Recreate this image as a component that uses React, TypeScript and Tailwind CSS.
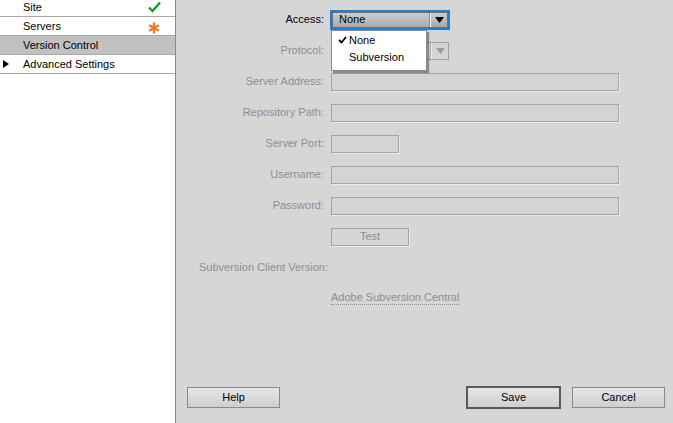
import React from 'react';

const font = { fontFamily: '"Liberation Sans", Arial, sans-serif' };

function Field({ label, children }: { label: string; children?: React.ReactNode }) {
  return (
    <div className="flex h-[31px] items-center">
      <div className="w-[148px] shrink-0 text-right text-[#8e8e8e]">{label}</div>
      <div className="ml-[7px] flex items-center">{children}</div>
    </div>
  );
}

function TextBox({ w = 'w-[288px]' }: { w?: string }) {
  return (
    <div className={`${w} h-[18px] border border-[#a3a3a3] bg-[#d4d4d4] shadow-[1px_1px_0_#ececec]`} />
  );
}

function Arrow({ color }: { color: string }) {
  return (
    <svg width="9" height="6" viewBox="0 0 9 6">
      <path d="M0 0h9L4.5 6z" fill={color} />
    </svg>
  );
}

export default function App() {
  return (
    <div style={font} className="flex h-[423px] w-[673px] overflow-hidden text-[11px] leading-none text-black">
      {/* Sidebar */}
      <div className="w-[176px] shrink-0 border-r border-[#8a8a8a] bg-white">
        <div className="-mt-[2px]">
          <div className="flex h-[19px] items-center justify-between border-b border-[#a9a9a9] pl-[23px] pr-[14px]">
            <span>Site</span>
            <svg width="13" height="12" viewBox="0 0 13 12">
              <path d="M1 6.5l3.5 3.5L12 1.5" stroke="#1c9a1c" strokeWidth="2.4" fill="none" />
            </svg>
          </div>
          <div className="flex h-[19px] items-center justify-between border-b border-[#a9a9a9] pl-[23px] pr-[15px]">
            <span>Servers</span>
            <svg width="12" height="12" viewBox="0 0 12 12" className="relative top-[2px]">
              <g stroke="#ea7a2a" strokeWidth="2.4" strokeLinecap="butt">
                <path d="M6 0.5v11" />
                <path d="M1.2 3.2l9.6 5.6" />
                <path d="M1.2 8.8l9.6-5.6" />
              </g>
            </svg>
          </div>
          <div className="flex h-[19px] items-center border-b border-[#a9a9a9] bg-[#c1c1c1] pl-[23px]">
            <span>Version Control</span>
          </div>
          <div className="flex h-[19px] items-center border-b border-[#a9a9a9] pl-[3px]">
            <svg width="6" height="8" viewBox="0 0 6 8" className="mr-[14px]">
              <path d="M0 0l6 4-6 4z" fill="#000" />
            </svg>
            <span>Advanced Settings</span>
          </div>
        </div>
      </div>

      {/* Main */}
      <div className="flex flex-1 flex-col bg-[#d6d6d6]">
        <div className="pt-[4px]">
          <div className="flex h-[31px] items-center">
            <div className="w-[148px] shrink-0 text-right">Access:</div>
            <div className="relative ml-[6px]">
              <div className="flex h-[20px] w-[120px] items-center border-2 border-[#1c7fd8]">
                <div className="flex h-full flex-1 items-center border border-[#6e6e6e] bg-gradient-to-b from-[#cdcdcd] to-[#a9a9a9]">
                  <span className="flex-1 pl-[6px]">None</span>
                  <div className="h-full w-[2px] border-l border-r border-l-[#8a8a8a] border-r-[#f0f0f0]" />
                  <div className="flex w-[16px] justify-center">
                    <Arrow color="#000" />
                  </div>
                </div>
              </div>
              {/* Menu */}
              <div className="absolute left-[1px] top-[20px] z-10 w-[96px] border border-[#8a8a8a] bg-white py-[1px] shadow-[2px_2px_1px_rgba(0,0,0,0.35)]">
                <div className="flex h-[17px] items-center">
                  <svg width="9" height="8" viewBox="0 0 9 8" className="ml-[6px] mr-[2px]">
                    <path d="M1 4l2.5 2.5L8 1" stroke="#000" strokeWidth="1.8" fill="none" />
                  </svg>
                  <span>None</span>
                </div>
                <div className="flex h-[17px] items-center pl-[17px]">Subversion</div>
                <div className="h-[3px]" />
              </div>
            </div>
          </div>
          <Field label="Protocol:">
            <div className="flex h-[18px] w-[118px] items-center border border-[#a3a3a3] bg-[#d4d4d4]">
              <span className="flex-1" />
              <div className="h-full w-[2px] border-l border-r border-l-[#b0b0b0] border-r-[#ececec]" />
              <div className="flex w-[16px] justify-center">
                <Arrow color="#9a9a9a" />
              </div>
            </div>
          </Field>
          <Field label="Server Address:">
            <TextBox />
          </Field>
          <Field label="Repository Path:">
            <TextBox />
          </Field>
          <Field label="Server Port:">
            <TextBox w="w-[68px]" />
          </Field>
          <Field label="Username:">
            <TextBox />
          </Field>
          <Field label="Password:">
            <TextBox />
          </Field>
          <Field label="">
            <div className="flex h-[18px] w-[78px] items-center justify-center border border-[#a3a3a3] text-[#8e8e8e] shadow-[1px_1px_0_#ececec]">
              Test
            </div>
          </Field>
          <div className="flex h-[31px] items-center pl-[23px] text-[#8e8e8e]">Subversion Client Version:</div>
          <Field label="">
            <span className="border-b border-dotted border-[#8e8e8e] pb-[1px] text-[#8e8e8e]">Adobe Subversion Central</span>
          </Field>
        </div>

        <div className="flex-1" />

        <div className="flex items-center pb-[14px] pl-[11px] pr-[8px]">
          <button className="h-[21px] w-[93px] border border-[#8a8a8a] bg-gradient-to-b from-[#e6e6e6] to-[#cfcfcf]">
            Help
          </button>
          <div className="flex-1" />
          <button className="h-[23px] w-[95px] border-2 border-[#5a5a5a] bg-gradient-to-b from-[#e6e6e6] to-[#cfcfcf]">
            Save
          </button>
          <button className="ml-[11px] h-[21px] w-[93px] border border-[#8a8a8a] bg-gradient-to-b from-[#e6e6e6] to-[#cfcfcf]">
            Cancel
          </button>
        </div>
      </div>
    </div>
  );
}
